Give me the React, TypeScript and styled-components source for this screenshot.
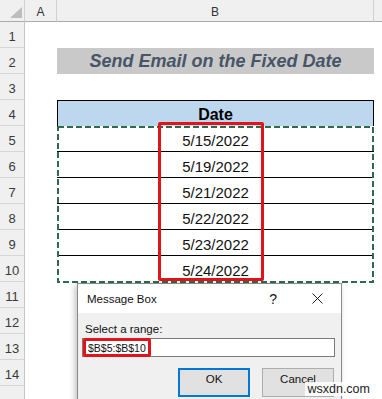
import React from 'react';
import styled, { createGlobalStyle } from 'styled-components';

const GlobalStyle = createGlobalStyle`
    html, body {
        margin: 0;
        padding: 0;
        background: #ffffff;
    }
    body {
        width: 382px;
        height: 399px;
        overflow: hidden;
        font-family: "Liberation Sans", Arial, sans-serif;
    }
`;

const dates = ['5/15/2022', '5/19/2022', '5/21/2022', '5/22/2022', '5/23/2022', '5/24/2022'];

type Kind = 'empty' | 'title' | 'head' | 'data' | 'last';

const kindOf = (row: number): Kind => {
    if (row === 2) return 'title';
    if (row === 4) return 'head';
    if (row >= 5 && row <= 9) return 'data';
    if (row === 10) return 'last';
    return 'empty';
};

export default function App() {
    const rows = Array.from({ length: 15 }, (_, i) => i + 1);

    return (
        <Page>
            <GlobalStyle />
            <Sheet>
                <Corner>
                    <svg width="25" height="22" viewBox="0 0 25 22">
                        <polygon points="10,18 22,18 22,7" fill="#bdbdbd" />
                    </svg>
                </Corner>
                <ColHead>A</ColHead>
                <ColHead>B</ColHead>
                <ColHead $last />

                {rows.map((r) => {
                    const kind = kindOf(r);
                    let text = '';
                    if (kind === 'title') text = 'Send Email on the Fixed Date';
                    if (kind === 'head') text = 'Date';
                    if (kind === 'data' || kind === 'last') text = dates[r - 5];
                    return (
                        <React.Fragment key={r}>
                            {/* row 15 is only a sliver at the bottom edge, its number falls outside */}
                            <RowHead>{r < 15 ? r : ''}</RowHead>
                            <Cell />
                            <CellB $kind={kind}>{text}</CellB>
                            <Cell />
                        </React.Fragment>
                    );
                })}
            </Sheet>

            <Marquee width="317" height="157" viewBox="0 0 317 157">
                <rect x="1" y="1" width="315" height="155" fill="none" stroke="#2f6a4a" strokeWidth="2" strokeDasharray="6 3" />
            </Marquee>

            <Highlight />

            <Dialog>
                <TitleBar>
                    <DialogTitle>Message Box</DialogTitle>
                    <Help>?</Help>
                    <Close width="11" height="11" viewBox="0 0 11 11">
                        <path d="M0.5 0.5 L10.5 10.5 M10.5 0.5 L0.5 10.5" stroke="#1f1f1f" strokeWidth="1" />
                    </Close>
                </TitleBar>
                <Body>
                    <Label>Select a range:</Label>
                    <Input>
                        <RangeText>$B$5:$B$10</RangeText>
                    </Input>
                    <Buttons>
                        <Button $primary>OK</Button>
                        <Button>Cancel</Button>
                    </Buttons>
                </Body>
            </Dialog>

            <Watermark>wsxdn.com</Watermark>
        </Page>
    );
}

const Page = styled.div`
    position: relative;
    width: 382px;
    height: 399px;
    overflow: hidden;
    background: #ffffff;
`;

const Sheet = styled.div`
    display: grid;
    grid-template-columns: 25px 32px 317px 1fr;
    grid-template-rows: 22px;
    grid-auto-rows: 26px;
    width: 382px;
`;

const Corner = styled.div`
    background: #f0f0f0;
    border-bottom: 1px solid #ababab;
    border-right: 1px solid #d0d0d0;
    box-sizing: border-box;
    svg {
        display: block;
    }
`;

const ColHead = styled.div<{ $last?: boolean }>`
    box-sizing: border-box;
    background: #f0f0f0;
    border-bottom: 1px solid #ababab;
    border-right: ${(p) => (p.$last ? 'none' : '1px solid #d0d0d0')};
    display: flex;
    align-items: center;
    justify-content: center;
    font-size: 12px;
    color: #333333;
    padding-top: 2px;
`;

const RowHead = styled.div`
    box-sizing: border-box;
    background: #f0f0f0;
    border-right: 1px solid #c6c6c6;
    border-bottom: 1px solid #d6d6d6;
    display: flex;
    align-items: center;
    justify-content: center;
    font-size: 13px;
    color: #3a3a3a;
    padding-top: 4px;
`;

const Cell = styled.div`
    background: #ffffff;
`;

const CellB = styled.div<{ $kind: Kind }>`
    box-sizing: border-box;
    display: flex;
    align-items: center;
    justify-content: center;
    color: #111111;
    font-size: 15px;
    padding-top: 3px;
    background: ${(p) => (p.$kind === 'title' ? '#c9c9c9' : p.$kind === 'head' ? '#bdd7ee' : '#ffffff')};
    ${(p) =>
        p.$kind === 'title' &&
        `
        font-size: 18px;
        font-weight: bold;
        font-style: italic;
        color: #475567;
        padding-top: 1px;
    `}
    ${(p) =>
        p.$kind === 'head' &&
        `
        border: 1px solid #000000;
        border-bottom: none;
        font-size: 16px;
        font-weight: bold;
        color: #000000;
        padding-top: 2px;
    `}
    ${(p) => p.$kind === 'data' && `border-bottom: 1px solid #000000;`}
`;

const Marquee = styled.svg`
    position: absolute;
    left: 57px;
    top: 126px;
    display: block;
`;

const Highlight = styled.div`
    position: absolute;
    left: 158px;
    top: 122px;
    width: 106px;
    height: 159px;
    box-sizing: border-box;
    border: 3px solid #e2141b;
    border-radius: 2px;
`;

const Dialog = styled.div`
    position: absolute;
    left: 77px;
    top: 283px;
    width: 265px;
    height: 140px;
    box-sizing: border-box;
    border: 1px solid #8a8a8a;
    background: #f0f0f0;
    box-shadow: -2px 2px 6px rgba(0, 0, 0, 0.25);
    display: flex;
    flex-direction: column;
`;

const TitleBar = styled.div`
    height: 29px;
    background: #ffffff;
    display: flex;
    align-items: center;
    padding: 0 18px 0 9px;
    font-size: 11.5px;
    color: #111111;
`;

const DialogTitle = styled.span`
    flex: 1;
`;

const Help = styled.span`
    font-size: 14px;
    margin-right: 35px;
`;

const Close = styled.svg`
    display: block;
`;

const Body = styled.div`
    padding: 8px 6px 0 4px;
    display: flex;
    flex-direction: column;
`;

const Label = styled.div`
    font-size: 11.5px;
    line-height: 16px;
    color: #111111;
    padding-left: 3px;
`;

const Input = styled.div`
    margin-top: 1px;
    height: 19px;
    box-sizing: border-box;
    border: 1px solid #7a7a7a;
    background: #ffffff;
    display: flex;
    align-items: stretch;
`;

const RangeText = styled.span`
    display: inline-flex;
    align-items: center;
    box-sizing: border-box;
    border: 3px solid #e2141b;
    border-radius: 2px;
    margin: -1px 0 -1px 0;
    padding: 0 2px 0 2px;
    font-size: 10.5px;
    color: #111111;
`;

const Buttons = styled.div`
    margin-top: 11px;
    display: flex;
    justify-content: flex-end;
    gap: 12px;
    padding-right: 1px;
`;

const Button = styled.div<{ $primary?: boolean }>`
    width: 72px;
    height: 29px;
    box-sizing: border-box;
    background: #e1e1e1;
    border: ${(p) => (p.$primary ? '2px solid #0078d7' : '1px solid #adadad')};
    display: flex;
    align-items: center;
    justify-content: center;
    padding-bottom: 8px;
    font-size: 11.5px;
    color: #111111;
`;

const Watermark = styled.div`
    position: absolute;
    right: 10px;
    bottom: 3px;
    padding: 0 2px;
    background: rgba(255, 255, 255, 0.85);
    font-size: 12.5px;
    color: #222222;
`;
